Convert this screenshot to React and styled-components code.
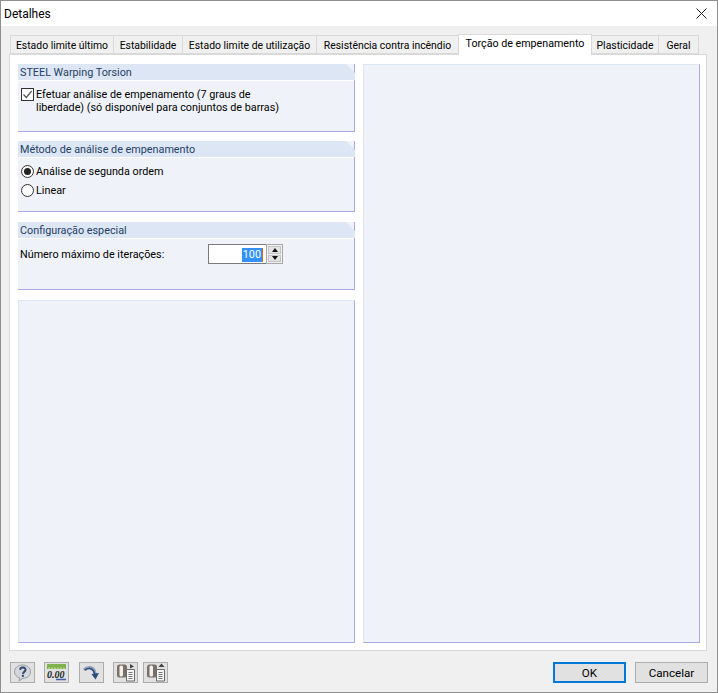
import React from "react";
import styled, { createGlobalStyle } from "styled-components";

const Global = createGlobalStyle`
	html, body {
		margin: 0;
		padding: 0;
		background: #f0f0f0;
	}
	* {
		box-sizing: border-box;
	}
`;

const Window = styled.div`
	display: flex;
	flex-direction: column;
	width: 718px;
	height: 693px;
	background-color: #f0f0f0;
	border: 1px solid #8f8f8f;
	color: #000;
	font-family: Roboto, "Liberation Sans", sans-serif;
	font-size: 10.8px;
	line-height: 16px;
	overflow: hidden;
`;

const TitleBar = styled.div`
	display: flex;
	align-items: center;
	justify-content: space-between;
	flex: 0 0 25px;
	background-color: #fff;
	padding: 0 10px 0 3px;
	font-size: 12px;
`;

const Content = styled.div`
	display: flex;
	flex-direction: column;
	flex-grow: 1;
	padding: 8px 10px 0 8px;
`;

const TabBar = styled.div`
	display: flex;
	align-items: flex-end;
	height: 20px;
	padding-left: 1px;
`;

const Tab = styled.div`
	display: flex;
	align-items: center;
	justify-content: center;
	width: ${(p) => p.$width}px;
	height: ${(p) => (p.$active ? 21 : 19)}px;
	margin: ${(p) => (p.$active ? "0 0 -1px -1px" : "0")};
	padding: ${(p) => (p.$active ? "0 0 3px" : "2px 0 0")};
	background-color: ${(p) => (p.$active ? "#fff" : "#f0f0f0")};
	border: 1px solid #d9d9d9;
	border-bottom: ${(p) => (p.$active ? "none" : "1px solid #d9d9d9")};
	border-left: ${(p) => (p.$first || p.$active ? "1px solid #d9d9d9" : "none")};
	position: relative;
	z-index: ${(p) => (p.$active ? 1 : 0)};
	font-size: ${(p) => (p.$active ? 10.7 : 10.4)}px;
	white-space: nowrap;
`;

const Panel = styled.div`
	display: grid;
	grid-template-columns: 337px 337px;
	column-gap: 8px;
	height: 597px;
	padding: 9px 6px 7px 8px;
	background-color: #fff;
	border: 1px solid #d9d9d9;
`;

const Column = styled.div`
	display: flex;
	flex-direction: column;
`;

const Group = styled.section`
	display: flex;
	flex-direction: column;
	height: ${(p) => p.$height}px;
	margin-bottom: ${(p) => p.$after}px;
	background-color: #eff3f9;
	border-right: 1px solid #a9a9e6;
	border-bottom: 1px solid #a9a9e6;
`;

const GroupTitle = styled.h2`
	flex: 0 0 16px;
	margin: 0 -1px 0 0;
	padding: 1px 0 0 2px;
	background-color: #dce6f4;
	color: #1f3f66;
	font-size: 10.8px;
	font-weight: 400;
	line-height: 15px;
	clip-path: polygon(0 0, calc(100% - 9px) 0, 100% 9px, 100% 100%, 0 100%);
`;

const GroupBody = styled.div`
	display: flex;
	flex-direction: column;
	padding: ${(p) => p.$pad};
	border-top: 1px solid #fff;
	flex-grow: 1;
`;

const EmptyPane = styled.div`
	flex-grow: 1;
	background-color: #eff3f9;
	border-top: 1px solid #dce6f4;
	border-left: 1px solid #dce6f4;
	border-right: 1px solid #a9a9e6;
	border-bottom: 1px solid #a9a9e6;
`;

const OptionRow = styled.label`
	display: flex;
	align-items: ${(p) => (p.$top ? "flex-start" : "center")};
	gap: 1px;
	min-height: 19px;
	line-height: ${(p) => (p.$top ? 13 : 16)}px;
`;

const CheckBox = styled.span`
	display: flex;
	flex: 0 0 13px;
	align-items: center;
	justify-content: center;
	width: 13px;
	height: 13px;
	margin: 0 1px;
	background-color: #fff;
	border: 1px solid #333;
`;

const Radio = styled.span`
	display: flex;
	flex: 0 0 13px;
	align-items: center;
	justify-content: center;
	width: 13px;
	height: 13px;
	margin: 0 1px;
	background-color: #fff;
	border: 1px solid #333;
	border-radius: 50%;
	&::after {
		content: "";
		display: ${(p) => (p.$checked ? "block" : "none")};
		width: 7px;
		height: 7px;
		background-color: #222;
		border-radius: 50%;
	}
`;

const OptionText = styled.span`
	width: 255px;
`;

const FieldRow = styled.div`
	display: flex;
	align-items: center;
`;

const FieldLabel = styled.span`
	width: 188px;
	padding-top: 1px;
`;

const NumberBox = styled.div`
	display: flex;
	justify-content: flex-end;
	align-items: center;
	width: 58px;
	height: 20px;
	padding: 1px 3px 0 0;
	background-color: #fff;
	border: 1px solid #7a7a7a;
	border-right: none;
`;

const Selected = styled.span`
	height: 14px;
	padding: 0 1px;
	background-color: #3390ff;
	border-right: 1px solid #d8641c;
	color: #fff;
	line-height: 14px;
`;

const Spinner = styled.div`
	display: flex;
	flex-direction: column;
	justify-content: center;
	gap: 1px;
	width: 17px;
	height: 20px;
	padding: 1px;
	background-color: #f0f0f0;
	border: 1px solid #a8a8a8;
`;

const SpinButton = styled.span`
	display: flex;
	align-items: center;
	justify-content: center;
	flex-grow: 1;
	background-color: #e4e4e4;
	border: 1px solid #c4c4c4;
	&::after {
		content: "";
		border-left: 3px solid transparent;
		border-right: 3px solid transparent;
		border-${(p) => (p.$up ? "bottom" : "top")}: 4px solid #111;
	}
`;

const Footer = styled.div`
	display: flex;
	align-items: flex-start;
	justify-content: space-between;
	flex-grow: 1;
	margin-right: -1px;
	padding: 11px 0 0 1px;
`;

const Tools = styled.div`
	display: flex;
`;

const ToolButton = styled.div`
	display: flex;
	align-items: center;
	justify-content: center;
	width: 25px;
	height: 21px;
	margin-right: ${(p) => p.$gap}px;
	background-color: #e1e1e1;
	border: 1px solid #adadad;
`;

const Actions = styled.div`
	display: flex;
	gap: 9px;
`;

const Button = styled.div`
	display: flex;
	align-items: center;
	justify-content: center;
	width: 73px;
	height: 21px;
	background-color: #e1e1e1;
	border: ${(p) => (p.$primary ? "2px solid #0078d7" : "1px solid #adadad")};
	font-size: 11.6px;
`;

const CloseIcon = () => (
	<svg width="11" height="11" viewBox="0 0 11 11">
		<path d="M0.5 0.5 L10.5 10.5 M10.5 0.5 L0.5 10.5" stroke="#222" strokeWidth="1" fill="none" />
	</svg>
);

const CheckMark = () => (
	<svg width="11" height="11" viewBox="0 0 11 11">
		<path d="M1.5 5.5 L4.3 8.5 L9.7 2" stroke="#555" strokeWidth="1.2" fill="none" />
	</svg>
);

const HelpIcon = () => (
	<svg width="19" height="18" viewBox="0 0 19 18">
		<path
			d="M9.5 1 C14.2 1 17.5 3.9 17.5 7.8 C17.5 11.6 14.2 14.3 10 14.3 L6 17 L6.6 13.8 C3.4 12.8 1.5 10.6 1.5 7.8 C1.5 3.9 4.8 1 9.5 1 Z"
			fill="#d3d6dc"
			stroke="#9a9da5"
		/>
		<path
			d="M7 5.8 C7.3 4.2 8.6 3.5 10 3.6 C11.8 3.7 12.8 4.9 12.4 6.3 C12 7.7 10.3 7.9 10 9.8"
			fill="none"
			stroke="#34476f"
			strokeWidth="2"
		/>
		<rect x="8.9" y="10.8" width="2" height="2" fill="#34476f" />
	</svg>
);

const DecimalIcon = () => (
	<svg width="21" height="19" viewBox="0 0 21 19">
		<rect x="1" y="1" width="19" height="5" fill="#7fb24a" />
		<path d="M3 4.5 V6 M6 4.5 V6 M9 4.5 V6 M12 4.5 V6 M15 4.5 V6 M18 4.5 V6" stroke="#d9ecc4" />
		<text x="1" y="15" fontFamily="Liberation Serif, serif" fontSize="10" fontStyle="italic" fontWeight="700" fill="#222">
			0.00
		</text>
		<path d="M10 16.5 H20" stroke="#3f5fa8" strokeWidth="1.5" />
	</svg>
);

const ArrowIcon = () => (
	<svg width="19" height="18" viewBox="0 0 19 18">
		<path d="M2 6 C5 2.5 10 2.5 12 6 L13.5 10" fill="none" stroke="#8e9cb8" strokeWidth="3" />
		<path d="M3 6 C6 3.8 9.5 4 11.5 7 L12.8 10.5" fill="none" stroke="#2f4f80" strokeWidth="1.6" />
		<path d="M9.5 10 L17 9 L13.5 15.5 Z" fill="#2a4a7c" />
	</svg>
);

const ExportIcon = ({ flip }) => (
	<svg width="20" height="19" viewBox="0 0 20 19">
		<rect x="1" y="1.5" width="10" height="13" rx="2.5" fill="#77716a" />
		<rect x="3.5" y="2.5" width="3.5" height="11" rx="1.5" fill="#f4f0e6" />
		<path d="M10.5 6.5 H18.5 V18 H10.5 Z" fill="#f6f6f6" stroke="#6a6a6a" />
		<path d="M12.5 9.5 H16.5 M12.5 11.5 H16.5 M12.5 13.5 H16.5 M12.5 15.5 H16.5" stroke="#777" />
		<path d={flip ? "M15.5 0.5 L18.5 4 H12.5 Z" : "M14 1 L18 3.5 L14 5.5 Z"} fill="#444" />
	</svg>
);

const tabs = [
	{ label: "Estado limite último", width: 104 },
	{ label: "Estabilidade", width: 69 },
	{ label: "Estado limite de utilização", width: 134 },
	{ label: "Resistência contra incêndio", width: 142 },
	{ label: "Torção de empenamento", width: 134, active: true },
	{ label: "Plasticidade", width: 67 },
	{ label: "Geral", width: 40 },
];

const App = () => {
	return (
		<Window>
			<Global />
			<TitleBar>
				<span>Detalhes</span>
				<CloseIcon />
			</TitleBar>
			<Content>
				<TabBar>
					{tabs.map((tab, i) => (
						<Tab key={tab.label} $width={tab.width} $active={tab.active} $first={i === 0}>
							{tab.label}
						</Tab>
					))}
				</TabBar>
				<Panel>
					<Column>
						<Group $height={68} $after={9}>
							<GroupTitle>STEEL Warping Torsion</GroupTitle>
							<GroupBody $pad="7px 2px 0">
								<OptionRow $top>
									<CheckBox>
										<CheckMark />
									</CheckBox>
									<OptionText>
										Efetuar análise de empenamento (7 graus de liberdade) (só disponível para conjuntos de barras)
									</OptionText>
								</OptionRow>
							</GroupBody>
						</Group>
						<Group $height={71} $after={10}>
							<GroupTitle>Método de análise de empenamento</GroupTitle>
							<GroupBody $pad="4px 2px 0">
								<OptionRow>
									<Radio $checked />
									<span>Análise de segunda ordem</span>
								</OptionRow>
								<OptionRow>
									<Radio />
									<span>Linear</span>
								</OptionRow>
							</GroupBody>
						</Group>
						<Group $height={68} $after={10}>
							<GroupTitle>Configuração especial</GroupTitle>
							<GroupBody $pad="5px 2px 0">
								<FieldRow>
									<FieldLabel>Número máximo de iterações:</FieldLabel>
									<NumberBox>
										<Selected>100</Selected>
									</NumberBox>
									<Spinner>
										<SpinButton $up />
										<SpinButton />
									</Spinner>
								</FieldRow>
							</GroupBody>
						</Group>
						<EmptyPane />
					</Column>
					<Column>
						<EmptyPane />
					</Column>
				</Panel>
				<Footer>
					<Tools>
						<ToolButton $gap={9}>
							<HelpIcon />
						</ToolButton>
						<ToolButton $gap={10}>
							<DecimalIcon />
						</ToolButton>
						<ToolButton $gap={9}>
							<ArrowIcon />
						</ToolButton>
						<ToolButton $gap={5}>
							<ExportIcon />
						</ToolButton>
						<ToolButton $gap={0}>
							<ExportIcon flip />
						</ToolButton>
					</Tools>
					<Actions>
						<Button $primary>OK</Button>
						<Button>Cancelar</Button>
					</Actions>
				</Footer>
			</Content>
		</Window>
	);
};

export default App;
